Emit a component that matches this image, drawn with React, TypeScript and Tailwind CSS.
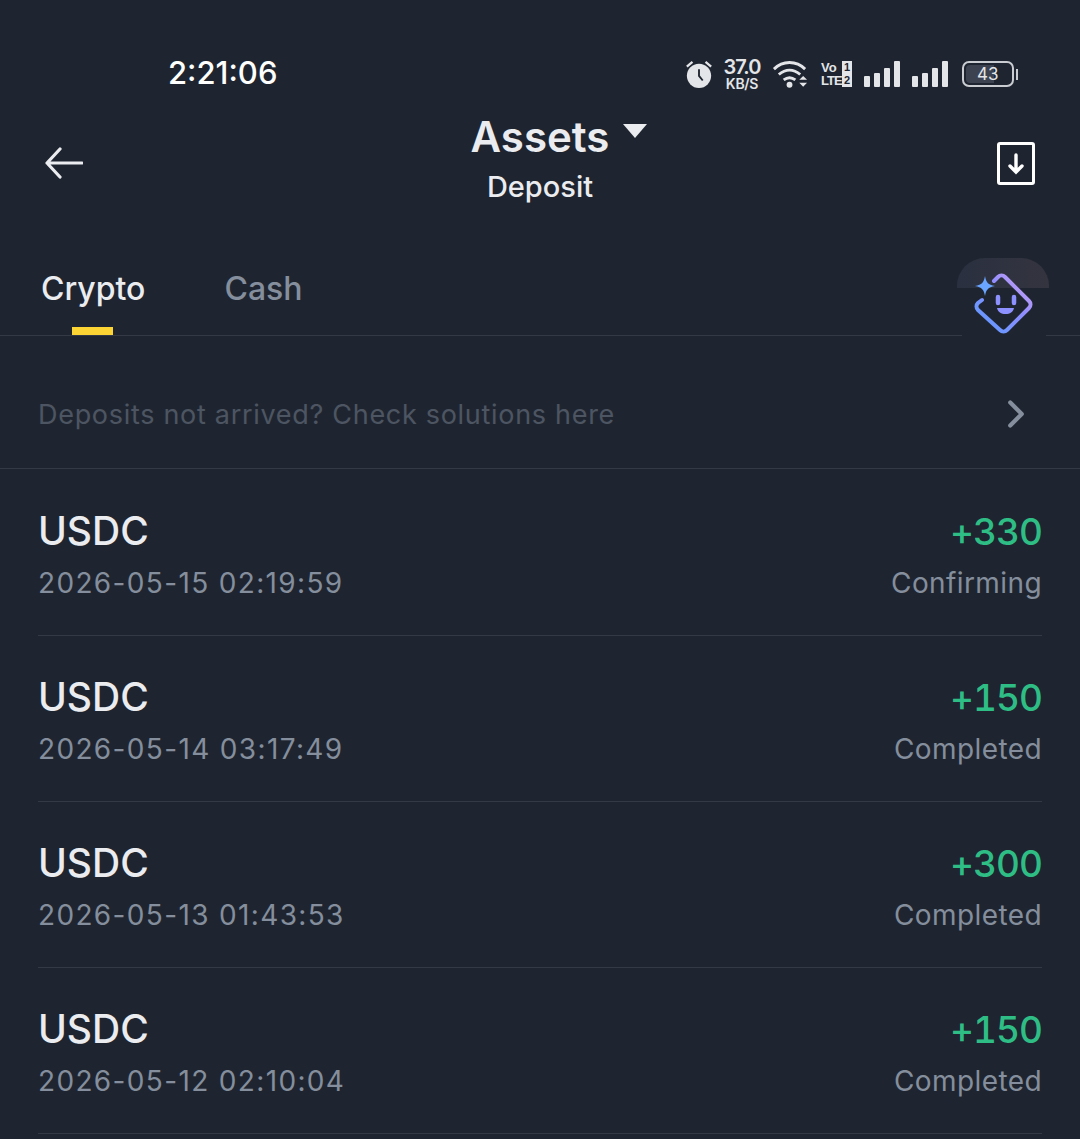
import { ChevronRight } from 'lucide-react';

const deposits = [
  { coin: 'USDC', time: '2026-05-15 02:19:59', amount: '+330', status: 'Confirming' },
  { coin: 'USDC', time: '2026-05-14 03:17:49', amount: '+150', status: 'Completed' },
  { coin: 'USDC', time: '2026-05-13 01:43:53', amount: '+300', status: 'Completed' },
  { coin: 'USDC', time: '2026-05-12 02:10:04', amount: '+150', status: 'Completed' },
];

function StatusIcons() {
  return (
    <div className="flex items-center text-[#e3e5e8]">
      {/* alarm */}
      <svg width="28" height="30" viewBox="0 0 30 32" className="mr-[10px]">
        <circle cx="15" cy="18" r="13" fill="#e3e5e8" />
        <path d="M15 11v7l4 5" fill="none" stroke="#1f2530" strokeWidth="2" />
        <path d="M2 8l6-5M28 8l-6-5" fill="none" stroke="#e3e5e8" strokeWidth="2.5" />
      </svg>
      <div className="mr-[11px] flex w-[38px] flex-col items-center font-semibold">
        <span className="text-[20px] leading-[20px] tracking-[-1px]">37.0</span>
        <span className="text-[14px] leading-[14px] tracking-[-0.3px]">KB/S</span>
      </div>
      {/* wifi */}
      <svg width="37" height="30" viewBox="0 0 38 30" className="mr-[12px]">
        <path d="M2 10C11 1 25 1 34 10M7 15.5c7-6 15-6 22 0M12 21c4-3 8-3 12 0" fill="none" stroke="#e3e5e8" strokeWidth="3" />
        <circle cx="18" cy="26" r="3" fill="#e3e5e8" />
        <path d="M28 21l4-4 4 4zM28 24h8l-4 4z" fill="#e3e5e8" />
      </svg>
      <div className="mr-[12px] flex w-[31px] flex-col font-['Liberation_Sans',sans-serif] text-[13px] font-bold leading-[13px]">
        <div className="flex justify-between">
          <span>Vo</span>
          <span className="bg-[#e3e5e8] px-[2px] text-[11px] text-[#1f2530]">1</span>
        </div>
        <div className="flex justify-between">
          <span className="tracking-[-1px]">LTE</span>
          <span className="bg-[#e3e5e8] px-[2px] text-[11px] text-[#1f2530]">2</span>
        </div>
      </div>
      <Signal />
      <div className="w-[12px]" />
      <Signal />
      <div className="w-[14px]" />
      {/* battery */}
      <div className="h-[26px] w-[52px] rounded-[7px] border-2 border-[#c9ccd1] p-[2px]">
        <div className="flex h-full w-[28px] items-center rounded-l-[4px] bg-[#3c4250]">
          <span className="pl-[11px] text-[17px] leading-none text-[#e3e5e8]">43</span>
        </div>
      </div>
      <div className="ml-[2px] h-[11px] w-[2px] bg-[#c9ccd1]" />
    </div>
  );
}

function Signal() {
  return (
    <div className="flex items-end gap-[4px]">
      <div className="h-[11px] w-[6px] rounded-[1px] bg-[#e3e5e8]" />
      <div className="h-[14px] w-[6px] rounded-[1px] bg-[#e3e5e8]" />
      <div className="h-[19px] w-[6px] rounded-[1px] bg-[#e3e5e8]" />
      <div className="h-[26px] w-[6px] rounded-[1px] bg-[#e3e5e8]" />
    </div>
  );
}

export default function App() {
  return (
    <main className="relative h-[1139px] w-[1080px] overflow-hidden bg-[#1f2530] font-['Inter',sans-serif] text-[#eaecef]">
      <div className="flex h-[103px] items-start justify-between pl-[168px] pr-[62px] pt-[53px]">
        <span className="text-[31px] font-medium leading-[40px] text-white">2:21:06</span>
        <div className="pt-[4px]">
          <StatusIcons />
        </div>
      </div>

      <header className="relative flex h-[124px] items-start justify-between pl-[45px] pr-[45px]">
        <svg width="38" height="32" viewBox="0 0 38 32" className="mt-[44px]">
          <path d="M37 16H2M15 2L2 16l13 14" fill="none" stroke="#eaecef" strokeWidth="3.2" strokeLinecap="round" strokeLinejoin="round" />
        </svg>
        <div className="absolute left-0 right-0 top-[6px] flex flex-col items-center">
          <div className="relative">
            <span className="text-[42px] font-semibold leading-[56px]">Assets</span>
            <div className="absolute left-[152px] top-[15px] h-0 w-0 border-x-[12px] border-t-[14px] border-x-transparent border-t-[#eaecef]" />
          </div>
          <span className="mt-[4px] text-[29px] font-medium leading-[36px]">Deposit</span>
        </div>
        <div className="mt-[39px] flex h-[43px] w-[38px] items-center justify-center rounded-[3px] border-[3px] border-white">
          <svg width="16" height="22" viewBox="0 0 16 22">
            <path d="M8 2v17M2 13l6 6 6-6" fill="none" stroke="#fff" strokeWidth="3.4" strokeLinecap="round" />
          </svg>
        </div>
      </header>

      <nav className="flex h-[109px] border-b border-[#343a45] pl-[41px]">
        <div className="relative mr-[79px] pt-[40px]">
          <span className="text-[32px] font-medium leading-[44px]">Crypto</span>
          <div className="absolute bottom-0 left-[31px] h-[8px] w-[41px] bg-[#fcd535]" />
        </div>
        <div className="pt-[40px] text-[32px] font-medium leading-[44px] text-[#848e9c]">Cash</div>
      </nav>

      {/* floating AI helper */}
      <div className="absolute left-[957px] top-[258px] h-[30px] w-[92px] rounded-t-[28px] bg-linear-to-r from-[#2a3040] to-[#34343f]" />
      <div className="absolute left-[962px] top-[288px] h-[50px] w-[84px] bg-[#1f2530]" />
      <svg width="66" height="66" viewBox="0 0 66 66" className="absolute left-[969px] top-[272px]">
        <defs>
          <linearGradient id="smile" x1="0" y1="1" x2="1" y2="0">
            <stop offset="0" stopColor="#5a9bff" />
            <stop offset="0.6" stopColor="#8f8cff" />
            <stop offset="1" stopColor="#d9a8ee" />
          </linearGradient>
        </defs>
        <path d="M25 9l4-4c2-2 5-2 7 0l24 24c2 2 2 5 0 7L38 58c-2 2-5 2-7 0L9 38c-2-2-2-5 0-7l4-3" fill="none" stroke="url(#smile)" strokeWidth="4" strokeLinecap="round" />
        <path d="M16 4c1 6 3 9 10 10-7 1-9 4-10 10-1-6-3-9-10-10 7-1 9-4 10-10z" fill="#6aa5ff" />
        <path d="M29 25v6M45 25v6" stroke="#8d90ff" strokeWidth="4.5" strokeLinecap="round" />
        <path d="M28 36h17c-1 4-4 6-8.500 6s-7.500-2-8.500-6z" fill="#8d90ff" />
      </svg>

      <div className="flex h-[133px] items-start justify-between border-b border-[#343a45] pl-[38px] pr-[41px] pt-[61px]">
        <span className="text-[27px] leading-[36px] tracking-[0.7px] text-[#4d5562]">Deposits not arrived? Check solutions here</span>
        <ChevronRight size={46} strokeWidth={2.2} className="-mt-[6px] text-[#848e9c]" />
      </div>

      <div className="px-[38px] pt-[1px]">
        {deposits.map((d) => (
          <div key={d.time} className="flex h-[166px] justify-between border-b border-[#343a45] pt-[37px]">
            <div>
              <div className="text-[39px] font-medium leading-[48px]">{d.coin}</div>
              <div className="mt-[10px] text-[28px] leading-[36px] tracking-[1.35px] text-[#848e9c]">{d.time}</div>
            </div>
            <div className="text-right">
              <div className="text-[37px] font-medium leading-[50px] tracking-[-1px] tabular-nums text-[#2ebd85]">{d.amount}</div>
              <div className="mt-[8px] text-[28px] leading-[36px] tracking-[0.4px] text-[#848e9c]">{d.status}</div>
            </div>
          </div>
        ))}
      </div>
    </main>
  );
}
